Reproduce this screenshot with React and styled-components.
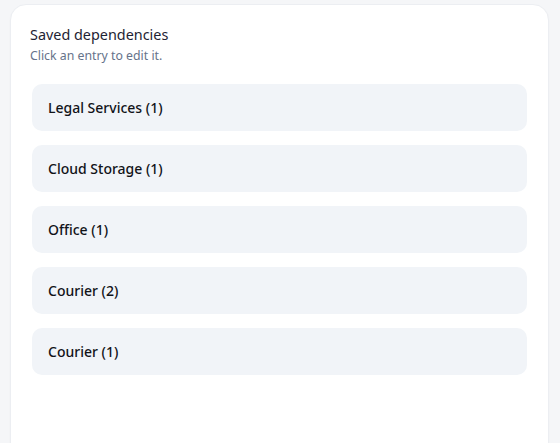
import React from 'react'
import styled, { createGlobalStyle } from 'styled-components'

const GlobalStyle = createGlobalStyle`
  html, body {
    margin: 0;
    padding: 0;
    background: #f5f6f8;
    font-family: "Noto Sans", "Open Sans", sans-serif;
  }
`;

const entries = [
  'Legal Services (1)',
  'Cloud Storage (1)',
  'Office (1)',
  'Courier (2)',
  'Courier (1)',
];

const App = () => {
  return (
    <>
      <GlobalStyle />
      <Page>
        <Card>
          <Title>Saved dependencies</Title>
          <Subtitle>Click an entry to edit it.</Subtitle>

          <List>
            {entries.map((name, i) => (
              <Entry key={i} type="button">{name}</Entry>
            ))}
          </List>
        </Card>
      </Page>
    </>
  )
};

const Page = styled.div`
  height: 443px;
  padding: 4px 11px 0 10px;
  box-sizing: border-box;
  overflow: hidden;
`;

const Card = styled.section`
  background: #ffffff;
  border: 1px solid #eceef2;
  border-radius: 16px;
  padding: 20px 19px 60px 19px;
  min-height: 480px;
  box-sizing: border-box;
  box-shadow: 0 1px 2px rgba(15, 23, 42, 0.03);
`;

const Title = styled.h2`
  margin: 0;
  font-size: 14.4px;
  font-weight: 400;
  line-height: 20px;
  color: #1e2333;
`;

const Subtitle = styled.p`
  margin: 3px 0 0;
  font-size: 12.3px;
  line-height: 16px;
  color: #66738a;
`;

const List = styled.div`
  display: flex;
  flex-direction: column;
  gap: 14px;
  margin-top: 20px;
  padding: 0 2px;
`;

const Entry = styled.button`
  display: flex;
  align-items: center;
  height: 47px;
  padding: 0 16px;
  border: none;
  border-radius: 10px;
  background: #f1f4f8;
  font-family: inherit;
  font-size: 14px;
  font-weight: 500;
  color: #111318;
  text-align: left;
  cursor: pointer;

  &:hover {
    background: #e9edf3;
  }
`;

export default App
